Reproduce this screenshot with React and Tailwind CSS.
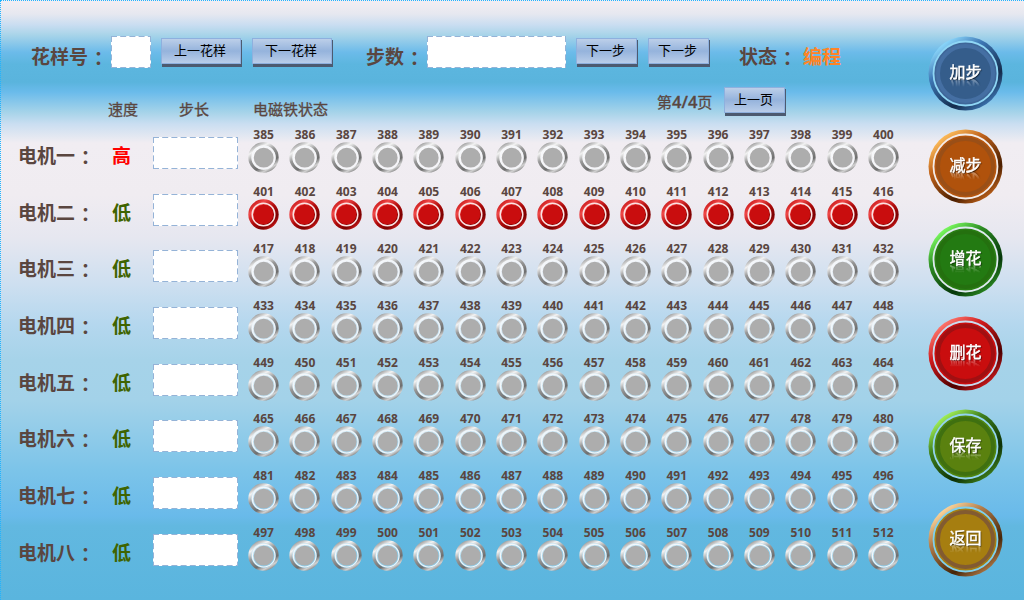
import React from "react";

const MOTORS = ["一", "二", "三", "四", "五", "六", "七", "八"];

const ACTIONS = [
  { label: "加步", hi: "#8fdcff", mid: "#3d76b4", lo: "#142c4c", ring: "#8fd6f5", band: "#456fa3", edge: "#3f6698", face: "#355d8b" },
  { label: "减步", hi: "#ffc05e", mid: "#c0621a", lo: "#4a1e00", ring: "#f4ece9", band: "#9a4f17", edge: "#b4560f", face: "#b0520c" },
  { label: "增花", hi: "#7dff62", mid: "#2c8a22", lo: "#06370a", ring: "#dfeaf0", band: "#24700f", edge: "#2a7d14", face: "#237a12" },
  { label: "删花", hi: "#ff7a70", mid: "#cf1a1c", lo: "#4c0000", ring: "#c9dcef", band: "#a01012", edge: "#c90e0f", face: "#c90d0e" },
  { label: "保存", hi: "#a6f55a", mid: "#3f7f1c", lo: "#0c3006", ring: "#93d3f0", band: "#3f7010", edge: "#4f8410", face: "#5a810f" },
  { label: "返回", hi: "#ffd9a0", mid: "#b07a48", lo: "#452508", ring: "#7fd0ee", band: "#825b31", edge: "#a37d14", face: "#a67e10" },
];

function Dashed({ width, className = "" }) {
  return (
    <div className={"shrink-0 bg-white h-8 " + className}>
      <svg className="block w-full h-full" fill="none" stroke="#95b3d7" strokeDasharray="6 3.2">
        <path d={`M0 .5H${width}M0 31.5H${width}M.5 0V32M${width - 0.5} 0V32`} />
      </svg>
    </div>
  );
}

function FlatButton({ children, className = "" }) {
  return (
    <button className={"shrink-0 h-[26px] border border-[#8eb0de] bg-linear-to-b from-[#bccfe9] via-[#95b3dc] to-[#b9cde9] shadow-[1px_2px_0_#4c5a70,1px_3px_0_#4c5a70] text-[13px] leading-[21px] pr-0.5 text-black flex justify-center items-start " + className}>
      {children}
    </button>
  );
}

function Led({ on }) {
  return (
    <svg className="block w-[31px] h-[31px]" viewBox="0 0 31 31" fill="none">
      {on ? (
        <>
          <circle cx="15.5" cy="15.5" r="15.2" fill="url(#rim-on)" />
          <circle cx="15.5" cy="15.5" r="11.3" stroke="#fbe3e3" strokeWidth="1.5" />
          <circle cx="15.5" cy="15.5" r="9.8" fill="#c90d0e" />
        </>
      ) : (
        <>
          <circle cx="15.5" cy="15.5" r="13" fill="url(#gloss)" />
          <circle cx="15.5" cy="15.5" r="13.7" stroke="url(#rim-off)" strokeWidth="3" />
          <circle cx="15.7" cy="15.7" r="11.3" stroke="#f4f7fa" strokeWidth="1.1" />
          <circle cx="15.7" cy="15.7" r="9.9" fill="#adadad" />
        </>
      )}
    </svg>
  );
}

function RoundButton({ a, i }) {
  return (
    <button className="grid shrink-0 w-[75px] h-[75px] place-items-center">
      <svg className="col-start-1 row-start-1 w-[75px] h-[75px]" viewBox="0 0 75 75">
        <defs>
          <linearGradient id={`act-${i}`} x1="0.22" y1="0.06" x2="0.85" y2="0.9">
            <stop offset="0" stopColor={a.hi} />
            <stop offset="0.3" stopColor={a.mid} />
            <stop offset="0.75" stopColor={a.lo} />
            <stop offset="1" stopColor={a.mid} />
          </linearGradient>
        </defs>
        <circle cx="37.5" cy="37.5" r="37" fill={`url(#act-${i})`} />
        <circle cx="37.5" cy="37.5" r="32" fill={a.edge} stroke={a.ring} strokeWidth="1.8" />
        <circle cx="37.5" cy="37.5" r="27.5" fill={a.face} stroke={a.band} strokeWidth="4" />
      </svg>
      <span className="col-start-1 row-start-1 text-white text-[16px] leading-[18px] -mt-[5px] [-webkit-text-stroke:0.4px_white] [text-shadow:1px_1px_1px_rgba(0,0,0,0.6)] [-webkit-box-reflect:below_-3px_linear-gradient(transparent_45%,rgba(0,0,0,0.5))]">
        {a.label}
      </span>
    </button>
  );
}

function Colon() {
  return (
    <span lang="zh-TW" className="relative top-0.5 left-px inline-block w-[19px] font-['Noto_Sans_CJK_TC',sans-serif]">
      ：
    </span>
  );
}

export default function App() {
  return (
    <div
      lang="zh-CN"
      className="w-[1024px] h-[600px] overflow-hidden flex border-t border-l border-dotted border-[#1fb4ff] text-[#5a4640] font-['Noto_Sans_CJK_SC',sans-serif] bg-origin-border bg-[linear-gradient(180deg,#f3eef2_0px,#e6e8f0_14px,#c9ddf1_25px,#a8d4e9_35px,#6cbbea_52px,#5cb6df_64px,#5ab4dd_82px,#6abbeb_92px,#a5d3e9_112px,#cadef1_124px,#f1edf2_143px,#f0ecf1_195px,#e6e7f0_238px,#cddff0_285px,#b4d7ee_325px,#a6d3e9_360px,#a3d2e9_400px,#7cc4e9_470px,#69baea_516px,#62b8e0_526px,#5ab5de_600px)]"
    >
      <svg className="absolute w-0 h-0">
        <defs>
          <linearGradient id="gloss" x1="0.15" y1="0.1" x2="0.85" y2="0.9">
            <stop offset="0" stopColor="#ffffff" stopOpacity="0.8" />
            <stop offset="0.5" stopColor="#ffffff" stopOpacity="0.3" />
            <stop offset="1" stopColor="#ffffff" stopOpacity="0.3" />
          </linearGradient>
          <linearGradient id="rim-off" x1="0.2" y1="0.02" x2="0.75" y2="0.98">
            <stop offset="0" stopColor="#a0a0a0" />
            <stop offset="0.18" stopColor="#f2f2f2" />
            <stop offset="0.42" stopColor="#989898" />
            <stop offset="0.75" stopColor="#6e6e6e" />
            <stop offset="0.92" stopColor="#d2d2d2" />
            <stop offset="1" stopColor="#989898" />
          </linearGradient>
          <linearGradient id="rim-on" x1="0.15" y1="0.1" x2="0.85" y2="0.9">
            <stop offset="0" stopColor="#c81818" />
            <stop offset="0.2" stopColor="#f04848" />
            <stop offset="0.5" stopColor="#b00a0a" />
            <stop offset="0.8" stopColor="#7a0000" />
            <stop offset="1" stopColor="#d01818" />
          </linearGradient>
        </defs>
      </svg>

      <main className="w-[927px] shrink-0">
        <header className="flex h-[50px] mt-[35px] pl-[30px] items-start whitespace-nowrap">
          <div className="w-[80px] shrink-0 pt-[6px] text-[19px] leading-7 font-bold">花样号<Colon /></div>
          <Dashed width={40} className="w-[40px]" />
          <FlatButton className="w-[80px] mt-[2px] ml-[10px]">上一花样</FlatButton>
          <FlatButton className="w-[80px] mt-[2px] ml-[11px]">下一花样</FlatButton>
          <div className="w-[61px] shrink-0 ml-[34px] pt-[6px] text-[19px] leading-7 font-bold">步数<Colon /></div>
          <Dashed width={139} className="w-[139px]" />
          <FlatButton className="w-[61px] mt-[2px] ml-[10px]">下一步</FlatButton>
          <FlatButton className="w-[61px] mt-[2px] ml-[11px]">下一步</FlatButton>
          <div className="ml-[30px] pt-[6px] text-[19px] leading-7 font-bold">状态<Colon /></div>
          <div className="ml-[7px] pt-[6px] text-[19px] leading-7 font-bold text-[#ff8426]">编程</div>
        </header>

        <div className="flex h-[41px] items-start text-[15px] leading-5 whitespace-nowrap [-webkit-text-stroke:0.3px_#5a4640]">
          <div className="w-[71px] ml-[107px] pt-[13px]">速度</div>
          <div className="w-[74px] pt-[13px]">步长</div>
          <div className="w-[404px] pt-[13px]">电磁铁状态</div>
          <div className="w-[67px] pt-[6px]">第<span className="text-[16.5px] font-semibold font-['Open_Sans',sans-serif]">4/4</span>页</div>
          <FlatButton className="w-[61px] mt-px [-webkit-text-stroke:0]">上一页</FlatButton>
        </div>

        <div className="flex items-start">
          <div className="shrink-0 w-[237px]">
            {MOTORS.map((m, r) => (
              <div key={m} className="flex h-[56.7px] items-start">
                <div className="w-[92px] shrink-0 pl-[17px] pt-[14px] text-[19px] leading-7 font-bold whitespace-nowrap">电机{m}<Colon /></div>
                <div className={"w-[60px] shrink-0 pl-[19px] pt-[14px] text-[19px] leading-7 font-bold " + (r === 0 ? "text-[#ff0000]" : "text-[#3f6400]")}>
                  {r === 0 ? "高" : "低"}
                </div>
                <Dashed width={85} className="w-[85px] mt-[10px]" />
              </div>
            ))}
          </div>
          <div className="grid grid-cols-16 auto-rows-[56.9px] w-[661px] ml-[5px]">
            {Array.from({ length: 128 }, (_, n) => (
              <div key={n} className="flex flex-col items-center">
                <span className="h-[15px] text-[12px] leading-[16px] font-bold font-['Open_Sans',sans-serif]">{385 + n}</span>
                <Led on={n >= 16 && n < 32} />
              </div>
            ))}
          </div>
        </div>
      </main>

      <aside className="flex flex-col pt-[34.5px] gap-[18.4px]">
        {ACTIONS.map((a, i) => (
          <RoundButton key={a.label} a={a} i={i} />
        ))}
      </aside>
    </div>
  );
}
